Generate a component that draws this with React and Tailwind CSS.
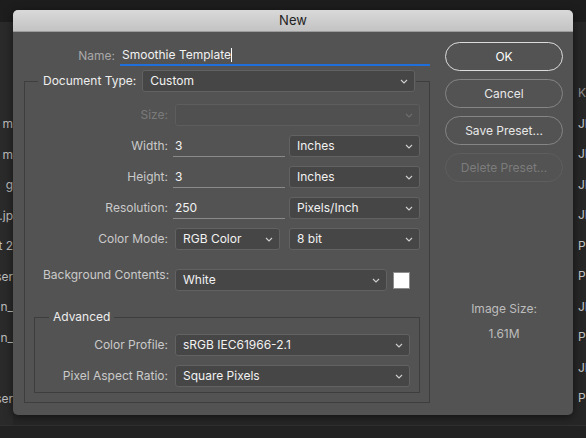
import React from "react";

const leftRows = ["m", "m", "g", "t.jp", "t 2", "ser", "n_", "n_", "", "ser"];
const rightRows = ["Kit", "JPEG", "JPEG", "JPEG", "JPEG", "PNG", "PNG", "JPEG", "PNG", "JPEG", "PNG"];

// ==============================
// Small pieces
// ==============================
const Chevron = ({ dim }) => (
  <svg width="8" height="5" viewBox="0 0 8 5" className="shrink-0">
    <path
      d="M1 1 L4 4 L7 1"
      fill="none"
      stroke={dim ? "#6e6e6e" : "#cfcfcf"}
      strokeWidth="1.1"
    />
  </svg>
);

const Select = ({ value, className = "", disabled }) => (
  <div
    className={`h-[22px] flex items-center justify-between pl-[7px] pr-[6px] rounded-[3px] border ${
      disabled ? "bg-[#505050] border-[#5d5d5d]" : "bg-[#464646] border-[#626262]"
    } ${className}`}
  >
    <span className="text-[#f2f2f2] whitespace-nowrap">{value}</span>
    <Chevron dim={disabled} />
  </div>
);

const Field = ({ value, className = "" }) => (
  <div className={`h-[22px] flex items-center border-b border-[#8a8a8a] pl-[2px] -ml-[2px] ${className}`}>
    <span className="text-[#f2f2f2]">{value}</span>
  </div>
);

const Label = ({ children, dim }) => (
  <span className={`text-right whitespace-nowrap ${dim ? "text-[#7b7b7b]" : "text-[#cacaca]"}`}>
    {children}
  </span>
);

const Button = ({ children, variant }) => {
  const styles = {
    ok: "border-[1.5px] border-[#dcdcdc] text-white",
    normal: "border border-[#858585] text-[#e8e8e8]",
    disabled: "border border-[#5e5e5e] text-[#7c7c7c]",
  };
  return (
    <div className={`h-[29px] rounded-full flex items-center justify-center ${styles[variant]}`}>
      {children}
    </div>
  );
};

export default function App() {
  return (
    <div
      className="relative w-[586px] h-[438px] bg-[#262626] overflow-hidden text-[12px] flex flex-col"
      style={{ fontFamily: "Inter, 'Noto Sans', sans-serif" }}
    >
      {/* Fondo: barra superior, listas y barra inferior */}
      <div className="h-[22px] bg-[#1d1d1d]" />
      <div className="flex flex-1">
        <div className="w-[13px] bg-[#2a2a2a] overflow-hidden pt-[87px] flex flex-col">
          {leftRows.map((t, i) => (
            <div key={i} className="h-[30.5px] flex items-center justify-end whitespace-nowrap text-[#bdbdbd]">
              {t}
            </div>
          ))}
        </div>
        <div className="flex-1" />
        <div className="w-[13px] pl-[5px] pt-[56px] flex flex-col">
          {rightRows.map((t, i) => (
            <div
              key={i}
              className={`h-[30.5px] flex items-center whitespace-nowrap ${i === 0 ? "text-[#8c8c8c]" : "text-[#c4c4c4]"}`}
            >
              {t}
            </div>
          ))}
        </div>
      </div>
      <div className="h-[13px] bg-[#222222] border-t border-[#303030]" />

      {/* Ventana "New" */}
      <div className="absolute left-[13px] top-[10px] w-[560px] h-[405px] rounded-[5px] bg-[#535353] overflow-hidden flex flex-col shadow-[0_2px_8px_rgba(0,0,0,0.5)]">
        <div className="h-[22px] shrink-0 bg-gradient-to-b from-[#d9d9d9] to-[#c3c3c3] border-b border-[#9c9c9c] flex items-center justify-center text-[13px] text-[#222222]">
          New
        </div>

        <div className="flex flex-1">
          {/* Columna izquierda */}
          <div className="w-[417px] pl-[11px] pt-[14px]">
            {/* Name */}
            <div className="flex items-center h-[20px]">
              <span className="w-[91px] text-right text-[#a8a8a8]">Name:</span>
              <div className="ml-[5px] w-[310px] h-[20px] flex items-center border-b-2 border-[#1e6fdc] pl-[2px]">
                <span className="text-[#f2f2f2]">Smoothie Template</span>
                <span className="w-px h-[14px] bg-white" />
              </div>
            </div>

            {/* Document Type */}
            <fieldset className="mt-[4px] w-[406px] h-[333px] border border-[#3e3e3e] flex flex-col">
              <legend className="ml-[13px] pl-[5px] pr-px">
                <div className="flex items-center">
                  <span className="text-[#eeeeee] whitespace-nowrap">Document Type:</span>
                  <Select value="Custom" className="ml-[6px] w-[273px]" />
                </div>
              </legend>

              <div className="grid grid-cols-[125px_1fr] gap-x-[7px] gap-y-[9px] items-center pl-[18px] pr-[9px] pt-[12px]">
                <Label dim>Size:</Label>
                <Select value="" disabled />

                <Label>Width:</Label>
                <div className="flex gap-[4px]">
                  <Field value="3" className="w-[112px]" />
                  <Select value="Inches" className="flex-1" />
                </div>

                <Label>Height:</Label>
                <div className="flex gap-[4px]">
                  <Field value="3" className="w-[112px]" />
                  <Select value="Inches" className="flex-1" />
                </div>

                <Label>Resolution:</Label>
                <div className="flex gap-[4px]">
                  <Field value="250" className="w-[112px]" />
                  <Select value="Pixels/Inch" className="flex-1" />
                </div>

                <Label>Color Mode:</Label>
                <div className="flex gap-[9px]">
                  <Select value="RGB Color" className="w-[105px]" />
                  <Select value="8 bit" className="flex-1" />
                </div>

                <Label>Background Contents:</Label>
                <div className="flex items-center gap-[6px] mt-[10px]">
                  <Select value="White" className="w-[212px]" />
                  <div className="w-[17px] h-[17px] bg-white border border-[#8e8e8e]" />
                </div>
              </div>

              {/* Advanced */}
              <fieldset className="mx-[9px] mt-[17px] h-[85px] border border-[#3e3e3e]">
                <legend className="ml-[14px] px-[4px] text-[#eeeeee]">Advanced</legend>
                <div className="grid grid-cols-[125px_1fr] gap-x-[7px] gap-y-[9px] items-center pl-[8px] pr-[9px] pt-[8px]">
                  <Label>Color Profile:</Label>
                  <Select value="sRGB IEC61966-2.1" />
                  <Label>Pixel Aspect Ratio:</Label>
                  <Select value="Square Pixels" />
                </div>
              </fieldset>
            </fieldset>
          </div>

          {/* Columna derecha */}
          <div className="w-[118px] ml-[15px] pt-[10px] flex flex-col gap-[8px]">
            <Button variant="ok">OK</Button>
            <Button variant="normal">Cancel</Button>
            <Button variant="normal">Save Preset...</Button>
            <Button variant="disabled">Delete Preset...</Button>
            <div className="mt-[110px] flex flex-col items-center gap-[7px] text-[#bdbdbd]">
              <span>Image Size:</span>
              <span>1.61M</span>
            </div>
          </div>
        </div>
      </div>
    </div>
  );
}
